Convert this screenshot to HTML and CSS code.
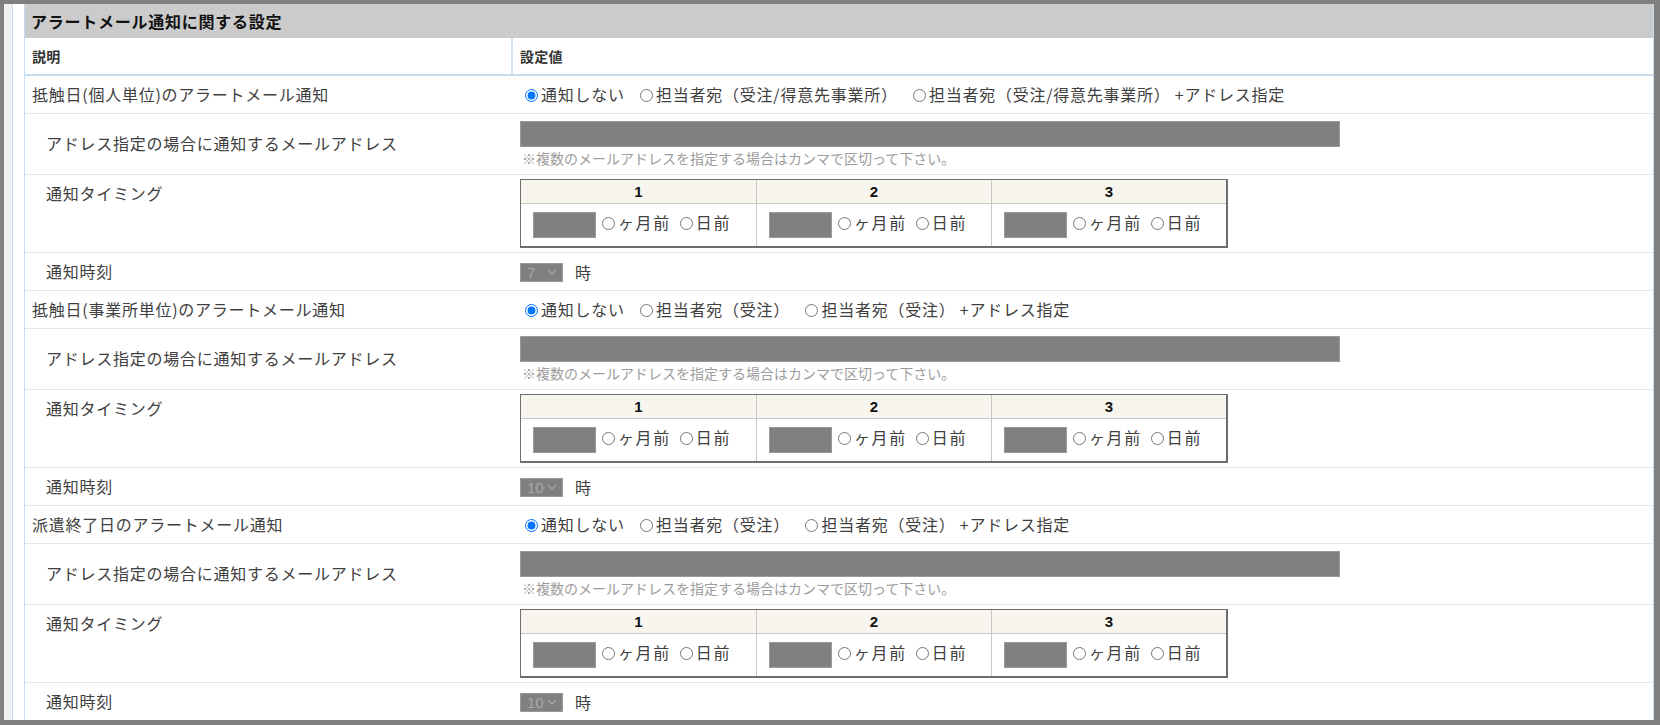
FILE: index.html
```html
<!DOCTYPE html>
<html lang="ja">
<head>
    <meta charset="utf-8">
    <title>アラートメール通知に関する設定</title>
    <link rel="stylesheet" href="styles.css">
</head>
<body>
<div class="frame">
    <div class="panel">
        <div class="box">
            <h2 class="box-title">アラートメール通知に関する設定</h2>
            <table class="settings">
                <colgroup>
                    <col class="col-desc">
                    <col>
                </colgroup>
                <thead>
                    <tr>
                        <th class="th-desc">説明</th>
                        <th>設定値</th>
                    </tr>
                </thead>
                <tbody>
                    <!-- 抵触日(個人単位) -->
                    <tr class="row-main">
                        <td>抵触日(個人単位)のアラートメール通知</td>
                        <td class="options">
                            <label><input type="radio" name="kojin" checked>通知しない</label>
                            <label><input type="radio" name="kojin">担当者宛（受注/得意先事業所）</label>
                            <label><input type="radio" name="kojin">担当者宛（受注/得意先事業所） +アドレス指定</label>
                        </td>
                    </tr>
                    <tr class="row-address">
                        <td class="sub">アドレス指定の場合に通知するメールアドレス</td>
                        <td>
                            <input type="text" class="mail-input" disabled>
                            <p class="note">※複数のメールアドレスを指定する場合はカンマで区切って下さい。</p>
                        </td>
                    </tr>
                    <tr class="row-timing">
                        <td class="sub">通知タイミング</td>
                        <td>
                            <table class="timing">
                                <tr><th>1</th><th>2</th><th>3</th></tr>
                                <tr>
                                    <td><input type="text" class="num-input" disabled><label><input type="radio" name="k1">ヶ月前</label><label><input type="radio" name="k1">日前</label></td>
                                    <td><input type="text" class="num-input" disabled><label><input type="radio" name="k2">ヶ月前</label><label><input type="radio" name="k2">日前</label></td>
                                    <td><input type="text" class="num-input" disabled><label><input type="radio" name="k3">ヶ月前</label><label><input type="radio" name="k3">日前</label></td>
                                </tr>
                            </table>
                        </td>
                    </tr>
                    <tr class="row-hour">
                        <td class="sub">通知時刻</td>
                        <td><span class="hour-select">7<svg width="10" height="6" viewBox="0 0 10 6"><path d="M1 1l4 4 4-4" fill="none" stroke="#a6a6a6" stroke-width="1.2"/></svg></span><span class="unit">時</span></td>
                    </tr>

                    <!-- 抵触日(事業所単位) -->
                    <tr class="row-main">
                        <td>抵触日(事業所単位)のアラートメール通知</td>
                        <td class="options">
                            <label><input type="radio" name="jigyo" checked>通知しない</label>
                            <label><input type="radio" name="jigyo">担当者宛（受注）</label>
                            <label><input type="radio" name="jigyo">担当者宛（受注） +アドレス指定</label>
                        </td>
                    </tr>
                    <tr class="row-address">
                        <td class="sub">アドレス指定の場合に通知するメールアドレス</td>
                        <td>
                            <input type="text" class="mail-input" disabled>
                            <p class="note">※複数のメールアドレスを指定する場合はカンマで区切って下さい。</p>
                        </td>
                    </tr>
                    <tr class="row-timing">
                        <td class="sub">通知タイミング</td>
                        <td>
                            <table class="timing">
                                <tr><th>1</th><th>2</th><th>3</th></tr>
                                <tr>
                                    <td><input type="text" class="num-input" disabled><label><input type="radio" name="j1">ヶ月前</label><label><input type="radio" name="j1">日前</label></td>
                                    <td><input type="text" class="num-input" disabled><label><input type="radio" name="j2">ヶ月前</label><label><input type="radio" name="j2">日前</label></td>
                                    <td><input type="text" class="num-input" disabled><label><input type="radio" name="j3">ヶ月前</label><label><input type="radio" name="j3">日前</label></td>
                                </tr>
                            </table>
                        </td>
                    </tr>
                    <tr class="row-hour">
                        <td class="sub">通知時刻</td>
                        <td><span class="hour-select">10<svg width="10" height="6" viewBox="0 0 10 6"><path d="M1 1l4 4 4-4" fill="none" stroke="#a6a6a6" stroke-width="1.2"/></svg></span><span class="unit">時</span></td>
                    </tr>

                    <!-- 派遣終了日 -->
                    <tr class="row-main">
                        <td>派遣終了日のアラートメール通知</td>
                        <td class="options">
                            <label><input type="radio" name="haken" checked>通知しない</label>
                            <label><input type="radio" name="haken">担当者宛（受注）</label>
                            <label><input type="radio" name="haken">担当者宛（受注） +アドレス指定</label>
                        </td>
                    </tr>
                    <tr class="row-address">
                        <td class="sub">アドレス指定の場合に通知するメールアドレス</td>
                        <td>
                            <input type="text" class="mail-input" disabled>
                            <p class="note">※複数のメールアドレスを指定する場合はカンマで区切って下さい。</p>
                        </td>
                    </tr>
                    <tr class="row-timing">
                        <td class="sub">通知タイミング</td>
                        <td>
                            <table class="timing">
                                <tr><th>1</th><th>2</th><th>3</th></tr>
                                <tr>
                                    <td><input type="text" class="num-input" disabled><label><input type="radio" name="h1">ヶ月前</label><label><input type="radio" name="h1">日前</label></td>
                                    <td><input type="text" class="num-input" disabled><label><input type="radio" name="h2">ヶ月前</label><label><input type="radio" name="h2">日前</label></td>
                                    <td><input type="text" class="num-input" disabled><label><input type="radio" name="h3">ヶ月前</label><label><input type="radio" name="h3">日前</label></td>
                                </tr>
                            </table>
                        </td>
                    </tr>
                    <tr class="row-hour">
                        <td class="sub">通知時刻</td>
                        <td><span class="hour-select">10<svg width="10" height="6" viewBox="0 0 10 6"><path d="M1 1l4 4 4-4" fill="none" stroke="#a6a6a6" stroke-width="1.2"/></svg></span><span class="unit">時</span></td>
                    </tr>
                </tbody>
            </table>
        </div>
    </div>
</div>
</body>
</html>
```

FILE: styles.css
```css
* {
    box-sizing: border-box;
}
html, body {
    margin: 0;
}
body {
    font-family: "Noto Sans CJK JP", "Noto Sans", sans-serif;
    font-size: 16px;
    letter-spacing: 0.75px;
    color: #404040;
    background-color: #808080;
}
.frame {
    height: 725px;
    border: solid #808080;
    border-width: 4px 6px 5px 4px;
    background-color: #f0f0f0;
    padding-left: 8px;
    overflow: hidden;
}
.panel {
    height: 100%;
    background-color: #fff;
    border-left: 1px solid #c9dcef;
    padding-left: 11px;
}
.box {
    height: 100%;
    border-left: 1px solid #c9dcef;
    border-right: 1px solid #c9dcef;
}
.box-title {
    margin: 0;
    height: 34px;
    line-height: 34px;
    padding-left: 6px;
    background-color: #cbcbcb;
    font-size: 16px;
    font-weight: bold;
    color: #111;
}

/* settings table */
.settings {
    width: 100%;
    border-collapse: collapse;
}
.col-desc {
    width: 487px;
}
.settings > thead th {
    height: 37px;
    padding: 0 7px;
    text-align: left;
    font-size: 14px;
    font-weight: bold;
    letter-spacing: 0.3px;
    color: #333;
    border-bottom: 2px solid #c8dcf0;
}
.settings > thead .th-desc {
    border-right: 2px solid #d3e3f3;
}
.settings > tbody > tr > td {
    padding: 0 7px;
    border-bottom: 1px solid #e8e8e8;
    vertical-align: middle;
    line-height: 21px;
}
.settings > tbody > tr > td + td {
    padding-left: 8px;
}
.settings > tbody > tr > td.sub {
    padding-left: 21px;
}
.row-main > td,
.row-hour > td {
    height: 38px;
}
.row-address > td {
    height: 61px;
}
.row-timing > td {
    height: 78px;
}
.row-timing > td.sub {
    vertical-align: top;
    padding-top: 8px;
}

/* radios */
input[type="radio"] {
    width: 13px;
    height: 13px;
    margin: 0 3px 0 5px;
    vertical-align: -1px;
}
.options label {
    margin-right: 6px;
}

/* mail address */
.mail-input {
    display: block;
    width: 820px;
    height: 26px;
    margin: 0;
    border: 1px solid #9a9a9a;
    background-color: #808080;
}
.note {
    margin: 2px 0 0 2px;
    font-size: 14px;
    line-height: 18px;
    letter-spacing: 0;
    color: #9c9c9c;
}

/* timing table */
.timing {
    width: 708px;
    border-collapse: separate;
    border-spacing: 0;
    border: 1px solid #6e6e6e;
    border-right-width: 2px;
    border-bottom-width: 2px;
}
.timing th {
    height: 24px;
    padding: 0;
    background-color: #f8f5ee;
    font-family: "Liberation Sans", Arial, sans-serif;
    font-size: 15px;
    font-weight: bold;
    letter-spacing: 0;
    color: #111;
    border-bottom: 1px solid #c8c8c8;
}
.timing td {
    width: 33.33%;
    height: 42px;
    padding: 0 0 0 12px;
    font-size: 16px;
    letter-spacing: 1.6px;
    white-space: nowrap;
}
.timing th + th,
.timing td + td {
    border-left: 1px solid #c8c8c8;
}
.num-input {
    width: 63px;
    height: 26px;
    margin: 0 1px 0 0;
    vertical-align: middle;
    border: 1px solid #9a9a9a;
    background-color: #808080;
}
.timing label {
    margin-right: 4px;
}

/* hour select */
.hour-select {
    display: inline-flex;
    align-items: center;
    justify-content: space-between;
    width: 43px;
    height: 19px;
    padding: 0 5px 0 6px;
    vertical-align: middle;
    background-color: #808080;
    border: 1px solid #9a9a9a;
    font-family: "Liberation Sans", Arial, sans-serif;
    font-size: 15px;
    letter-spacing: 0;
    color: #a8a8a8;
}
.unit {
    margin-left: 12px;
    vertical-align: middle;
}
```
